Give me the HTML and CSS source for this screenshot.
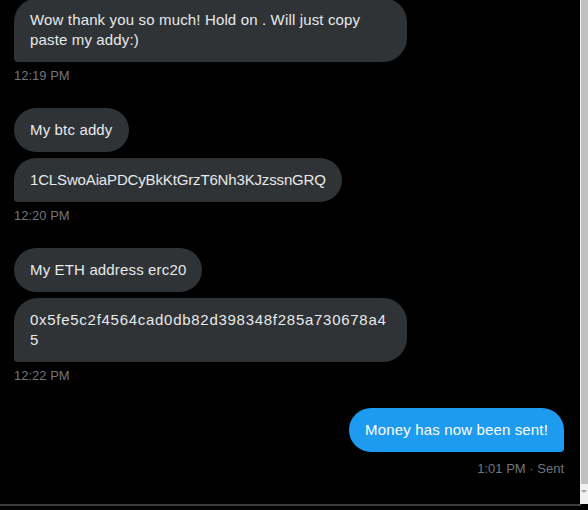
FILE: index.html
```html
<!DOCTYPE html>
<html>
<head>
<meta charset="utf-8">
<link rel="stylesheet" href="styles.css">
</head>
<body>
<div class="window">
  <div class="chat">
    <div class="group received first-group">
      <div class="bubble last">Wow thank you so much! Hold on . Will just copy paste my addy:)</div>
      <div class="time">12:19 PM</div>
    </div>
    <div class="group received">
      <div class="bubble">My btc addy</div>
      <div class="bubble last addr">1CLSwoAiaPDCyBkKtGrzT6Nh3KJzssnGRQ</div>
      <div class="time">12:20 PM</div>
    </div>
    <div class="group received">
      <div class="bubble">My ETH address erc20</div>
      <div class="bubble last hex">0x5fe5c2f4564cad0db82d398348f285a730678a45</div>
      <div class="time">12:22 PM</div>
    </div>
    <div class="group sent">
      <div class="bubble blue">Money has now been sent!</div>
      <div class="time sent-time">1:01 PM · Sent</div>
    </div>
  </div>
  <div class="scrollbar">
    <div class="thumb"></div>
    <div class="arrow"></div>
  </div>
</div>
<div class="bottom-line"></div>
</body>
</html>
```

FILE: styles.css
```css
html, body {
  margin: 0;
  padding: 0;
  background: #000;
  width: 588px;
  height: 510px;
  overflow: hidden;
  font-family: "Liberation Sans", Arial, sans-serif;
}

.window {
  display: flex;
  height: 504px;
}

.chat {
  flex: 1;
  overflow: hidden;
  padding: 0 16px 0 14px;
  display: flex;
  flex-direction: column;
}

.group {
  display: flex;
  flex-direction: column;
  gap: 6px;
  margin-bottom: 24px;
}

.first-group {
  margin-top: -2px;
}

.received {
  align-items: flex-start;
}

.sent {
  align-items: flex-end;
}

.bubble {
  background: #2f3336;
  color: #e7e9ea;
  font-size: 15px;
  line-height: 20px;
  letter-spacing: 0.15px;
  padding: 12px 16px;
  border-radius: 24px;
  max-width: 393px;
  box-sizing: border-box;
  overflow-wrap: anywhere;
}

.bubble.addr {
  letter-spacing: -0.15px;
}

.bubble.hex {
  letter-spacing: 0.72px;
}

.bubble.last {
  border-bottom-left-radius: 4px;
}

.bubble.blue {
  background: #1d9bf0;
  color: #fff;
  border-bottom-right-radius: 4px;
}

.time {
  color: #71767b;
  font-size: 13px;
  line-height: 16px;
}

.sent-time {
  margin-top: 3px;
}

.scrollbar {
  width: 8px;
  background: #f1f1f1;
  display: flex;
  flex-direction: column;
  align-items: flex-end;
}

.thumb {
  width: 7px;
  height: 484px;
  background: #c1c1c1;
}

.arrow {
  margin: 6px 1px 0 0;
  width: 0;
  height: 0;
  border-left: 3px solid transparent;
  border-right: 3px solid transparent;
  border-top: 3px solid #a3a3a3;
}

.bottom-line {
  width: 581px;
  height: 2px;
  background: #3c3c3c;
}
```
